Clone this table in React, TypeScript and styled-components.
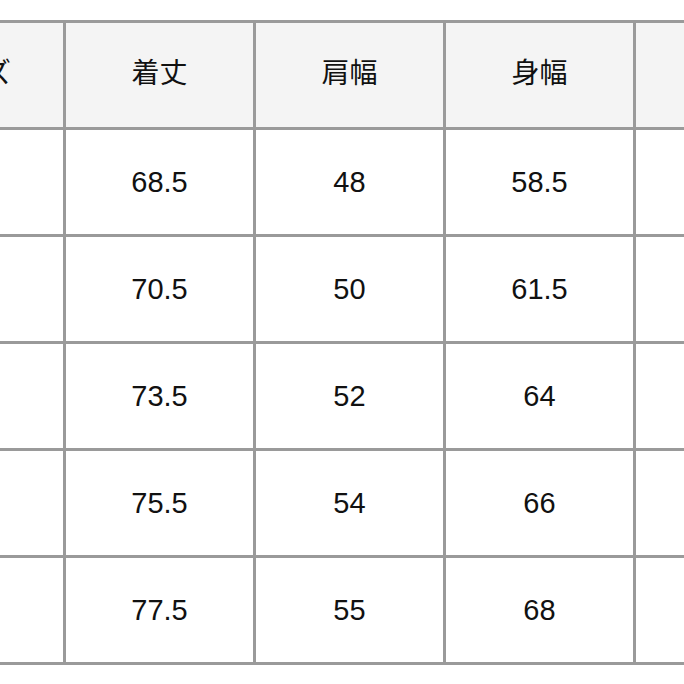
import styled, { createGlobalStyle } from "styled-components";

const GlobalStyle = createGlobalStyle`
  html, body {
    margin: 0;
    padding: 0;
    background: #ffffff;
  }
  body {
    font-family: "Liberation Sans", "Noto Sans CJK JP", sans-serif;
    color: #111111;
  }
`;

// the picture is cropped: the size names and the last column lie out of view
const headers = ["サイズ", "着丈", "肩幅", "身幅", ""];

const rows = [
  ["68.5", "48", "58.5"],
  ["70.5", "50", "61.5"],
  ["73.5", "52", "64"],
  ["75.5", "54", "66"],
  ["77.5", "55", "68"],
];

const App = () => {
  return (
    <>
      <GlobalStyle />
      <Page>
        <SizeTable>
          <thead>
            <tr>
              {headers.map((h, i) => (
                <HeadCell key={i}>{h}</HeadCell>
              ))}
            </tr>
          </thead>
          <tbody>
            {rows.map((row, r) => (
              <tr key={r}>
                <Cell />
                {row.map((v, i) => (
                  <Cell key={i}>{v}</Cell>
                ))}
                <Cell />
              </tr>
            ))}
          </tbody>
        </SizeTable>
      </Page>
    </>
  );
};

const Page = styled.div`
  width: 684px;
  height: 684px;
  overflow: hidden;
  padding-top: 20px;
  box-sizing: border-box;
`;

const SizeTable = styled.table`
  border-collapse: collapse;
  table-layout: fixed;
  margin-left: -127px;
  width: 953px;
  border: 3px solid #9a9a9a;
`;

const HeadCell = styled.th`
  width: 187px;
  height: 96px;
  padding: 0 0 8px;
  border: 3px solid #9a9a9a;
  background: #f4f4f4;
  font-family: "Noto Sans CJK JP", sans-serif;
  font-weight: 400;
  font-size: 28px;
  text-align: center;
  vertical-align: middle;
`;

const Cell = styled.td`
  height: 104px;
  padding: 0;
  border: 3px solid #9a9a9a;
  background: #ffffff;
  font-family: "Liberation Sans", Arial, sans-serif;
  font-size: 29px;
  text-align: center;
  vertical-align: middle;
  color: #111111;
`;

export default App;
